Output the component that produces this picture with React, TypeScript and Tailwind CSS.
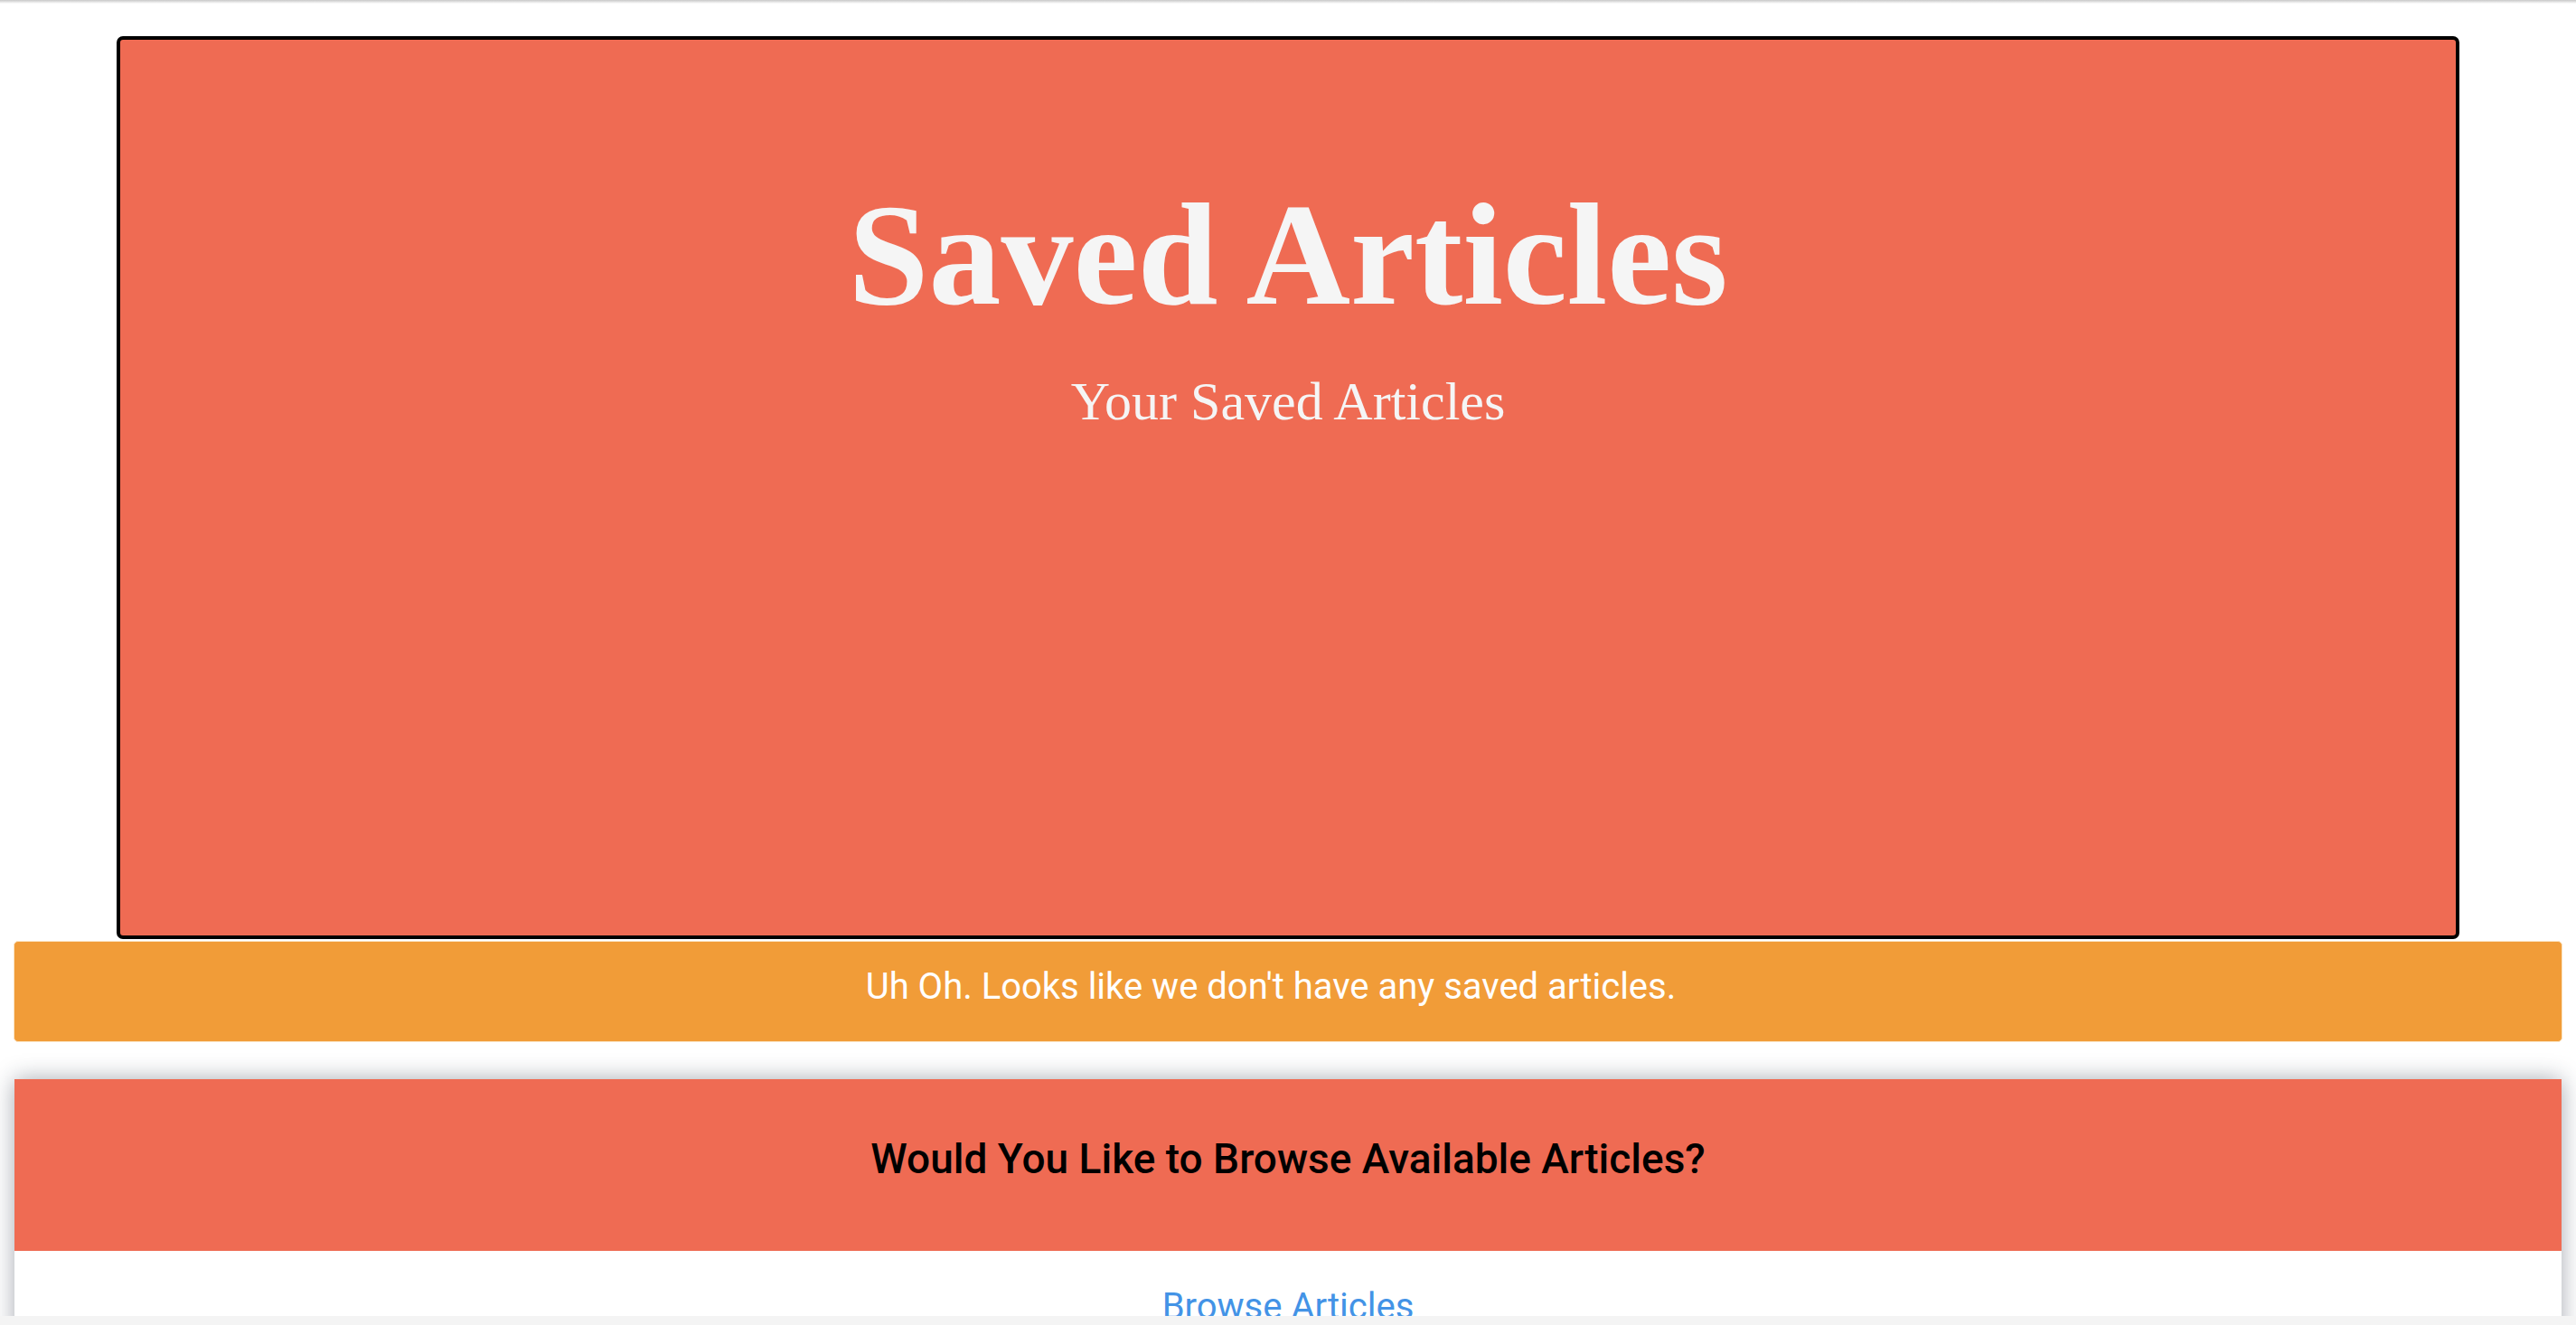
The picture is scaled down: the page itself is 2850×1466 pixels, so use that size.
const RED = 'bg-[#ef6b53]';

function Jumbotron() {
  return (
    <div className={`mx-[129px] mt-[40px] h-[999px] rounded-[7px] border-4 border-black ${RED} flex flex-col items-center`}>
      <h1 className="mt-[158px] font-['Liberation_Serif',serif] text-[160px] font-bold leading-none text-[#f5f5f5]">
        Saved Articles
      </h1>
      <p className="mt-[52px] font-['Liberation_Serif',serif] text-[60px] leading-none text-[#f5f5f5]">
        Your Saved Articles
      </p>
    </div>
  );
}

function EmptyAlert() {
  return (
    <div className="mx-[15px] mt-[2px] flex h-[112px] items-center justify-center rounded-[5px] border border-[#fbe2bf] bg-[#f19c38] pr-[38px] pb-[10px]">
      <span className="font-['Roboto',sans-serif] text-[40px] leading-none text-white">
        Uh Oh. Looks like we don't have any saved articles.
      </span>
    </div>
  );
}

function BrowseCard() {
  return (
    <div className="mx-[16px] mt-[41px] bg-white shadow-[0_0_24px_rgba(30,40,60,0.4)]">
      <div className={`flex h-[190px] items-center justify-center pb-[14px] ${RED}`}>
        <h2 className="font-['Roboto',sans-serif] text-[46px] font-medium leading-none text-black">
          Would You Like to Browse Available Articles?
        </h2>
      </div>
      <div className="flex justify-center pt-[38px] pb-[60px]">
        <a href="#" className="font-['Roboto',sans-serif] text-[40px] leading-[1.2] text-[#4393e6]">
          Browse Articles
        </a>
      </div>
    </div>
  );
}

export default function App() {
  return (
    <div className="relative h-[1466px] w-full overflow-hidden bg-white">
      {/* navbar shadow bleeding in at the top */}
      <div className="absolute inset-x-0 top-0 h-[4px] bg-gradient-to-b from-[#c8c8c8] to-white" />
      <Jumbotron />
      <EmptyAlert />
      <BrowseCard />
      {/* bottom scroll strip */}
      <div className="absolute inset-x-0 bottom-0 h-[10px] bg-[#f4f4f4]" />
    </div>
  );
}
